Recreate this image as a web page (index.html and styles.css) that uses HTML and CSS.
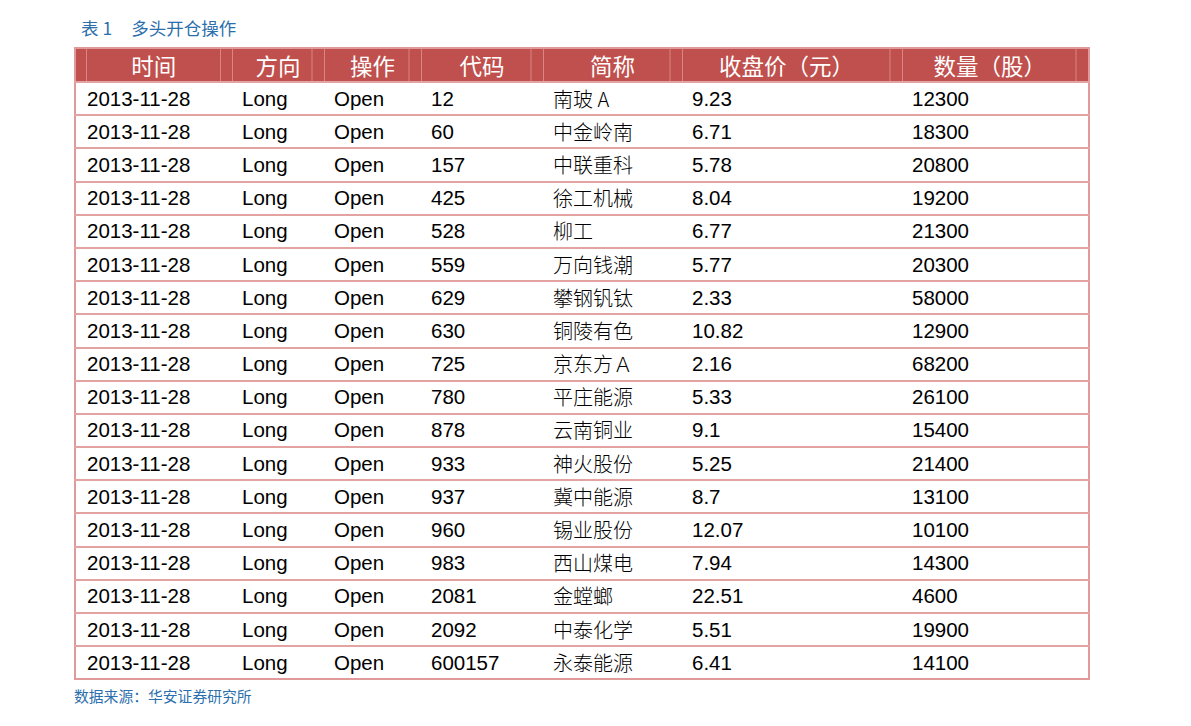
FILE: index.html
```html
<!DOCTYPE html>
<html lang="zh">
<head>
<meta charset="utf-8">
<title>表1 多头开仓操作</title>
<link rel="stylesheet" href="styles.css">
</head>
<body>
<div class="page">
  <div class="caption"><span class="num">表 1</span><span>多头开仓操作</span></div>
  <table class="data">
    <colgroup>
      <col class="c1"><col class="c2"><col class="c3"><col class="c4"><col class="c5"><col class="c6"><col class="c7">
    </colgroup>
    <thead>
      <tr>
        <th class="h1">时间</th><th>方向</th><th>操作</th><th>代码</th><th>简称</th><th class="hr">收盘价（元）</th><th class="hr">数量（股）</th>
      </tr>
    </thead>
    <tbody>
      <tr><td>2013-11-28</td><td>Long</td><td>Open</td><td>12</td><td class="cn">南玻 A</td><td>9.23</td><td>12300</td></tr>
      <tr><td>2013-11-28</td><td>Long</td><td>Open</td><td>60</td><td class="cn">中金岭南</td><td>6.71</td><td>18300</td></tr>
      <tr><td>2013-11-28</td><td>Long</td><td>Open</td><td>157</td><td class="cn">中联重科</td><td>5.78</td><td>20800</td></tr>
      <tr><td>2013-11-28</td><td>Long</td><td>Open</td><td>425</td><td class="cn">徐工机械</td><td>8.04</td><td>19200</td></tr>
      <tr><td>2013-11-28</td><td>Long</td><td>Open</td><td>528</td><td class="cn">柳工</td><td>6.77</td><td>21300</td></tr>
      <tr><td>2013-11-28</td><td>Long</td><td>Open</td><td>559</td><td class="cn">万向钱潮</td><td>5.77</td><td>20300</td></tr>
      <tr><td>2013-11-28</td><td>Long</td><td>Open</td><td>629</td><td class="cn">攀钢钒钛</td><td>2.33</td><td>58000</td></tr>
      <tr><td>2013-11-28</td><td>Long</td><td>Open</td><td>630</td><td class="cn">铜陵有色</td><td>10.82</td><td>12900</td></tr>
      <tr><td>2013-11-28</td><td>Long</td><td>Open</td><td>725</td><td class="cn">京东方Ａ</td><td>2.16</td><td>68200</td></tr>
      <tr><td>2013-11-28</td><td>Long</td><td>Open</td><td>780</td><td class="cn">平庄能源</td><td>5.33</td><td>26100</td></tr>
      <tr><td>2013-11-28</td><td>Long</td><td>Open</td><td>878</td><td class="cn">云南铜业</td><td>9.1</td><td>15400</td></tr>
      <tr><td>2013-11-28</td><td>Long</td><td>Open</td><td>933</td><td class="cn">神火股份</td><td>5.25</td><td>21400</td></tr>
      <tr><td>2013-11-28</td><td>Long</td><td>Open</td><td>937</td><td class="cn">冀中能源</td><td>8.7</td><td>13100</td></tr>
      <tr><td>2013-11-28</td><td>Long</td><td>Open</td><td>960</td><td class="cn">锡业股份</td><td>12.07</td><td>10100</td></tr>
      <tr><td>2013-11-28</td><td>Long</td><td>Open</td><td>983</td><td class="cn">西山煤电</td><td>7.94</td><td>14300</td></tr>
      <tr><td>2013-11-28</td><td>Long</td><td>Open</td><td>2081</td><td class="cn">金螳螂</td><td>22.51</td><td>4600</td></tr>
      <tr><td>2013-11-28</td><td>Long</td><td>Open</td><td>2092</td><td class="cn">中泰化学</td><td>5.51</td><td>19900</td></tr>
      <tr><td>2013-11-28</td><td>Long</td><td>Open</td><td>600157</td><td class="cn">永泰能源</td><td>6.41</td><td>14100</td></tr>
    </tbody>
  </table>
  <div class="source">数据来源：华安证券研究所</div>
</div>
</body>
</html>
```

FILE: styles.css
```css
html, body {
  margin: 0;
  padding: 0;
  background: #ffffff;
}

.page {
  padding: 16px 0 0 74px;
  width: 1014px;
  font-family: "Liberation Sans", Arial, "Noto Sans CJK SC", sans-serif;
}

.caption {
  display: flex;
  gap: 19px;
  padding-left: 7px;
  height: 24px;
  line-height: 24px;
  font-family: "Noto Sans CJK SC", sans-serif;
  font-size: 17.5px;
  color: #2c6fad;
  margin-bottom: 7px;
}

.data {
  border-collapse: collapse;
  table-layout: fixed;
  width: 1014px;
  border: 2px solid #e09a9a;
}

.c1 { width: 157px; }
.c2 { width: 92px; }
.c3 { width: 97px; }
.c4 { width: 122px; }
.c5 { width: 139px; }
.c6 { width: 220px; }
.c7 { width: 187px; }

.data th {
  height: 32px;
  padding: 0;
  background:
    linear-gradient(to right,
      transparent calc(100% - 12px),
      #d98583 calc(100% - 12px),
      #d98583 calc(100% - 11px),
      transparent calc(100% - 11px)),
    #c0504d;
  border-right: 1px solid #d98583;
  border-bottom: 2px solid #e3a3a2;
  color: #ffffff;
  font-family: "Noto Sans CJK SC", sans-serif;
  font-weight: normal;
  font-size: 22.5px;
  text-align: center;
  line-height: 30px;
}

.data th:last-child {
  border-right: none;
}

.data th.h1 {
  padding-left: 11px;
  padding-right: 11px;
  background:
    linear-gradient(to right,
      transparent 10px,
      #d98583 10px,
      #d98583 11px,
      transparent 11px,
      transparent calc(100% - 12px),
      #d98583 calc(100% - 12px),
      #d98583 calc(100% - 11px),
      transparent calc(100% - 11px)),
    #c0504d;
}

.data th.hr {
  padding-right: 11px;
}

.data td {
  height: 31.2px;
  padding: 0 0 0 10px;
  border-bottom: 2px solid #e3a3a2;
  font-size: 20.5px;
  color: #000000;
  line-height: 30px;
  white-space: nowrap;
}

.data td:first-child {
  padding-left: 11px;
}

.data td.cn {
  font-family: "Noto Sans CJK SC", sans-serif;
  font-size: 20px;
  font-weight: 300;
}

.data tbody tr:last-child td {
  border-bottom: 2px solid #e09a9a;
}

.source {
  margin-top: 6px;
  padding-left: 0;
  font-family: "Noto Sans CJK SC", sans-serif;
  font-size: 14.8px;
  line-height: 20px;
  color: #2c6fad;
}
```
